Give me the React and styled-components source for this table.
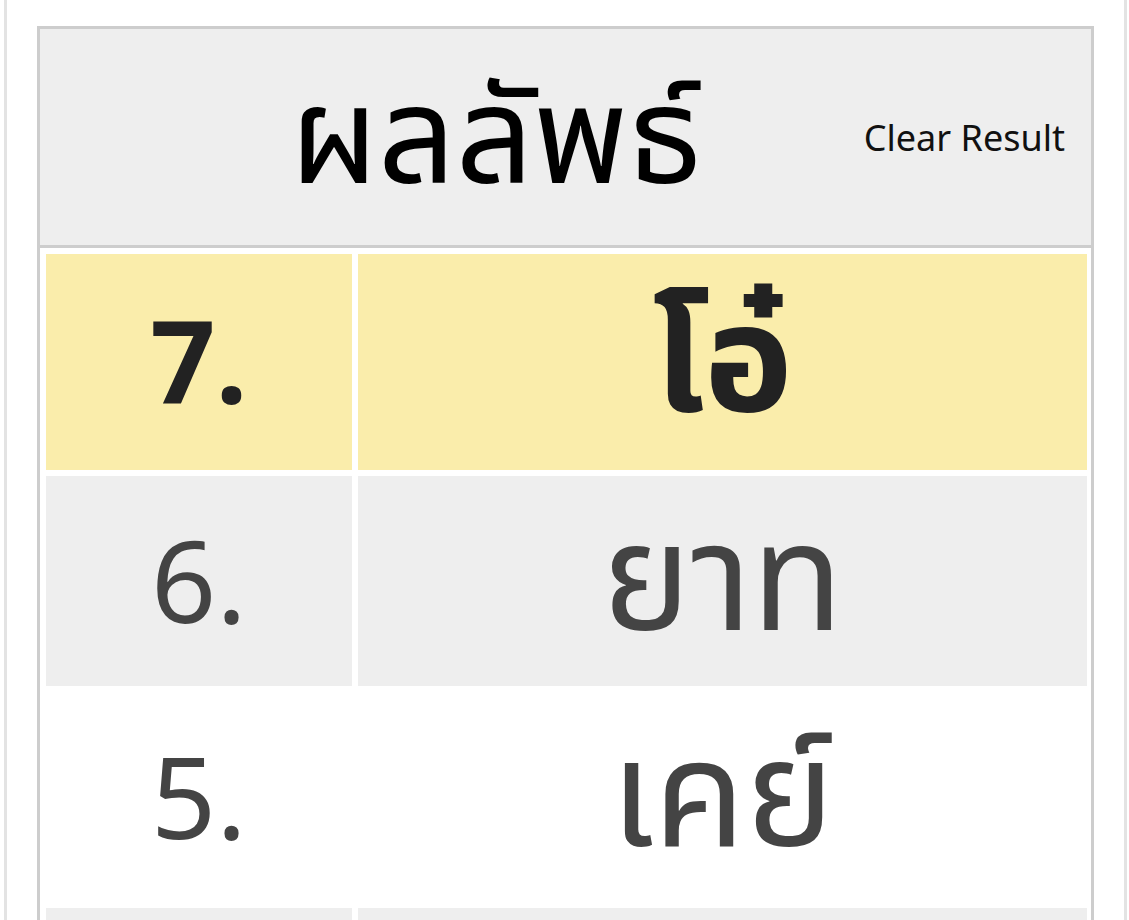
import React from 'react';
import styled, { createGlobalStyle } from 'styled-components';

const GlobalStyle = createGlobalStyle`
  html, body {
    margin: 0;
    padding: 0;
    background: #ffffff;
  }
  body {
    font-family: 'Noto Sans Thai', 'Noto Sans', 'DejaVu Sans', sans-serif;
    overflow: hidden;
  }
`;

const Frame = styled.div`
  margin: 0 2px 0 4px;
  min-height: 920px;
  border-left: 3px solid #e3e3e3;
  border-right: 3px solid #e3e3e3;
  padding: 26px 30px 0 30px;
`;

const Panel = styled.div`
  border: 3px solid #cdcdcd;
  border-bottom: none;
`;

const Header = styled.div`
  display: grid;
  grid-template-columns: 1fr auto;
  align-items: center;
  height: 216px;
  background: #eeeeee;
  border-bottom: 3px solid #cdcdcd;
`;

const Title = styled.h1`
  margin: 10px 0 0;
  padding-left: 176px;
  text-align: center;
  font-size: 136px;
  font-weight: 400;
  line-height: 1;
  color: #000000;
`;

const ClearButton = styled.button`
  background: none;
  border: none;
  cursor: pointer;
  margin: 0 26px 0 88px;
  padding: 0;
  font-family: 'Noto Sans', sans-serif;
  font-size: 36px;
  color: #111111;
`;

const Table = styled.div`
  display: grid;
  grid-template-columns: 306px 1fr;
  gap: 6px;
  padding: 6px 4px 0 6px;
`;

const bg = { top: '#faedab', odd: '#eeeeee', even: '#ffffff' };

const Cell = styled.div`
  display: flex;
  align-items: center;
  justify-content: center;
  height: ${p => (p.$tone === 'top' ? 216 : 210)}px;
  padding-top: ${p => (p.$word ? 8 : 14)}px;
  box-sizing: border-box;
  background: ${p => bg[p.$tone]};
  color: ${p => (p.$tone === 'top' ? '#222222' : '#444444')};
  font-weight: ${p => (p.$tone === 'top' ? 700 : 400)};
  font-size: ${p => (p.$word ? 150 : 114)}px;
  line-height: 1;
`;

const results = [
  { rank: 7, word: 'โอ๋' },
  { rank: 6, word: 'ยาท' },
  { rank: 5, word: 'เคย์' },
  { rank: 4, word: '' },
];

const toneFor = i => (i === 0 ? 'top' : i % 2 === 1 ? 'odd' : 'even');

const App = () => (
  <>
    <GlobalStyle />
    <Frame>
      <Panel>
        <Header>
          <Title>ผลลัพธ์</Title>
          <ClearButton>Clear Result</ClearButton>
        </Header>
        <Table>
          {results.map((r, i) => (
            <React.Fragment key={r.rank}>
              <Cell $tone={toneFor(i)}>{r.word ? `${r.rank}.` : ''}</Cell>
              <Cell $tone={toneFor(i)} $word>{r.word}</Cell>
            </React.Fragment>
          ))}
        </Table>
      </Panel>
    </Frame>
  </>
);

export default App;
